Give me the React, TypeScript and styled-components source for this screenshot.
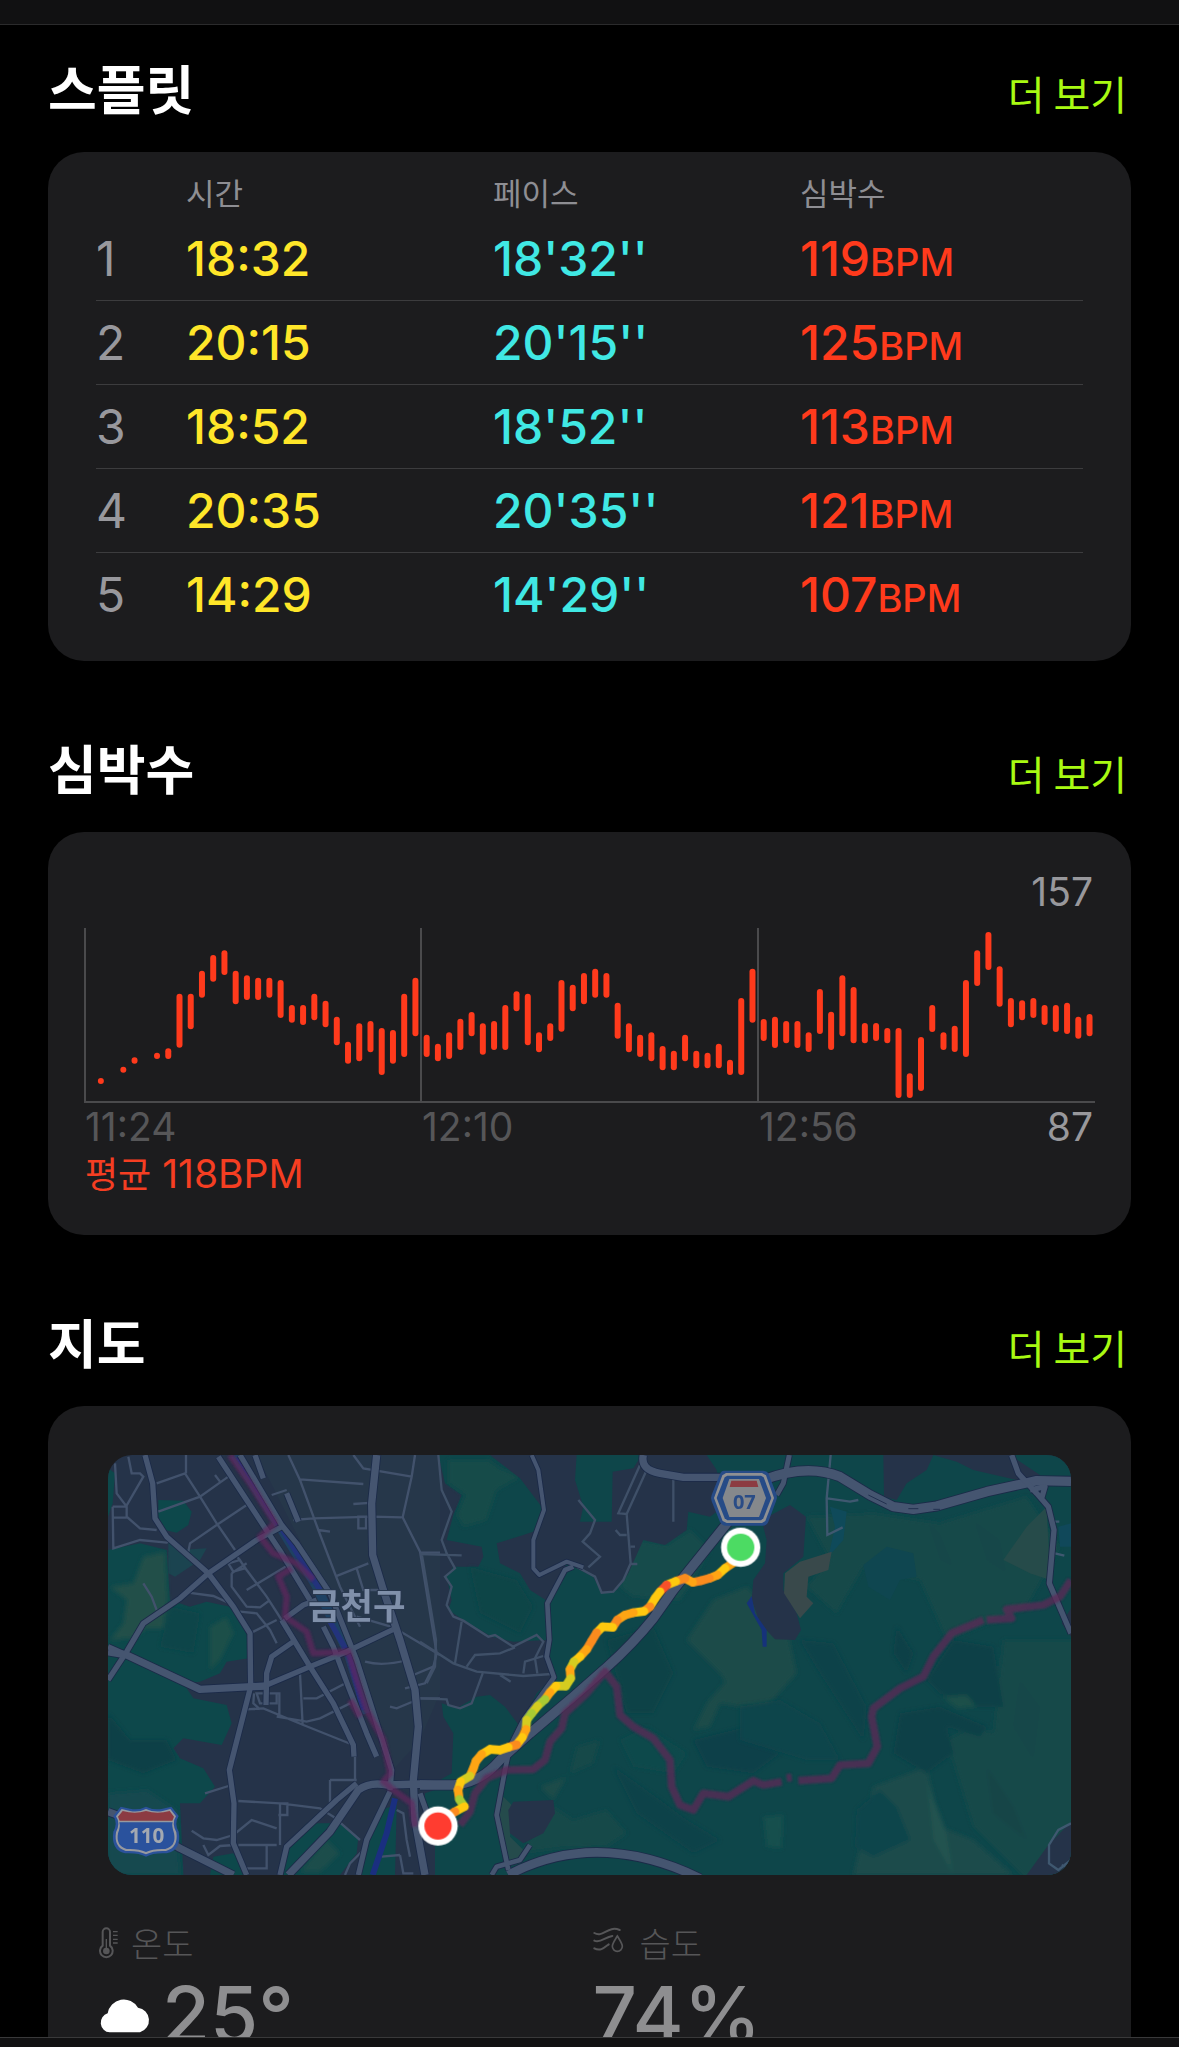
import React from "react";
import styled, { createGlobalStyle } from "styled-components";

const GlobalStyle = createGlobalStyle`
  html, body { margin: 0; background: #000; }
  * { box-sizing: border-box; }
  body { font-family: Inter, "Noto Sans CJK KR", sans-serif; -webkit-font-smoothing: antialiased; }
`;

const Screen = styled.div`
  height: 100vh;
  display: flex;
  flex-direction: column;
  background: #000;
  overflow: hidden;
`;

const TopBar = styled.header`
  flex: 0 0 25px;
  background: #111112;
  border-bottom: 1px solid #2b2b2c;
`;

const BottomBar = styled.footer`
  flex: 0 0 10px;
  background: #111112;
  border-top: 1px solid #39393a;
`;

const Content = styled.main`
  flex: 1;
  min-height: 0;
  overflow: hidden;
  padding: 26px 48px 0;
  display: flex;
  flex-direction: column;
  gap: 70px;
`;

const Section = styled.section`
  flex: none;
`;

const SectionHeader = styled.div`
  display: flex;
  align-items: baseline;
  justify-content: space-between;
  height: 101px;
  padding-right: 4px;
`;

const Title = styled.h2`
  margin: 0;
  font-family: "Noto Sans CJK KR", sans-serif;
  font-size: 53px;
  line-height: 72px;
  font-weight: 700;
  color: #fff;
`;

const MoreButton = styled.button`
  border: 0;
  padding: 0;
  background: none;
  font-family: "Noto Sans CJK KR", sans-serif;
  font-size: 40px;
  line-height: 48px;
  font-weight: 400;
  color: #a8fa12;
  cursor: pointer;
`;

const Card = styled.div<{ $pad: string }>`
  background: #1c1c1e;
  border-radius: 36px;
  padding: ${(p) => p.$pad};
`;

const SplitTable = styled.table`
  width: 100%;
  table-layout: fixed;
  border-collapse: separate;
  border-spacing: 0;
`;

const Col = styled.col<{ $w?: string }>`
  width: ${(p) => p.$w ?? "auto"};
`;

const HeadCell = styled.th`
  height: 45px;
  padding: 0;
  text-align: left;
  vertical-align: top;
  font-family: "Noto Sans CJK KR", sans-serif;
  font-size: 31px;
  line-height: 40px;
  font-weight: 400;
  color: #8e8e93;
`;

const SplitRow = styled.tr`
  &:not(:last-child) > td { border-bottom: 1px solid #3c3c3e; }
`;

const Cell = styled.td<{ $color: string; $light?: boolean }>`
  height: 84px;
  padding: 0;
  font-size: 48px;
  line-height: 60px;
  font-weight: ${(p) => (p.$light ? 400 : 500)};
  color: ${(p) => p.$color};
`;

const Unit = styled.span`
  font-size: 38px;
  line-height: 38px;
`;

const ChartMax = styled.div`
  text-align: right;
  font-size: 39px;
  line-height: 48px;
  padding-right: 2px;
  color: #98989c;
`;

const ChartSvg = styled.svg`
  display: block;
  width: 100%;
  height: auto;
  margin-top: 12px;
`;

const AxisRow = styled.div`
  display: grid;
  grid-template-columns: repeat(3, 1fr);
`;

const AxisCell = styled.div`
  display: flex;
  justify-content: space-between;
  padding: 0 2px 0 1px;
  font-size: 39px;
  line-height: 48px;
  color: #565658;
`;

const AxisMin = styled.span`
  color: #98989c;
`;

const Average = styled.div`
  padding-left: 1px;
  font-size: 39px;
  line-height: 46px;
  color: #f53e22;
`;

const AverageLabel = styled.span`
  font-size: 36px;
  line-height: 40px;
`;

const MapFrame = styled.div`
  margin: 0 12px;
  border-radius: 24px;
  overflow: hidden;
`;

const MapSvg = styled.svg`
  display: block;
  width: 100%;
  height: auto;
`;

const Stats = styled.div`
  display: grid;
  grid-template-columns: 1fr 1fr;
  margin-top: 44px;
`;

const Stat = styled.div`
  padding-left: 3px;
`;

const StatLabel = styled.div<{ $gap: number }>`
  display: flex;
  align-items: center;
  gap: ${(p) => p.$gap}px;
  font-family: "Noto Sans CJK KR", sans-serif;
  font-size: 34px;
  line-height: 48px;
  font-weight: 300;
  color: #565658;
`;

const StatValue = styled.div`
  display: flex;
  align-items: center;
  gap: 9px;
  font-size: 78px;
  line-height: 96px;
  font-weight: 500;
  color: #8e8e90;
`;

const splits = [
  { time: "18:32", pace: "18'32''", bpm: 119 },
  { time: "20:15", pace: "20'15''", bpm: 125 },
  { time: "18:52", pace: "18'52''", bpm: 113 },
  { time: "20:35", pace: "20'35''", bpm: 121 },
  { time: "14:29", pace: "14'29''", bpm: 107 },
];

// [slot, top, bottom] in thirds of a unit, measured down from 28 above the plot area
const bars: [number, number, number][] = [
  [1, 534, 552], [3, 500, 518], [4, 472, 491], [6, 458, 477], [7, 445, 477], [8, 281, 443], [9, 281, 388],
  [10, 212, 293], [11, 165, 245], [12, 151, 225], [13, 212, 313], [14, 226, 300], [15, 233, 300], [16, 233, 293],
  [17, 240, 354], [18, 315, 368], [19, 315, 375], [20, 281, 361], [21, 302, 382], [22, 350, 436], [23, 425, 491],
  [24, 370, 484], [25, 363, 457], [26, 384, 525], [27, 390, 491], [28, 281, 471], [29, 233, 409], [30, 404, 471],
  [31, 431, 484], [32, 397, 477], [33, 356, 450], [34, 336, 409], [35, 370, 464], [36, 363, 450], [37, 315, 450],
  [38, 274, 334], [39, 281, 436], [40, 397, 457], [41, 370, 423], [42, 240, 395], [43, 254, 334], [44, 219, 313],
  [45, 206, 293], [46, 219, 293], [47, 308, 416], [48, 370, 457], [49, 404, 471], [50, 397, 484], [51, 438, 511],
  [52, 452, 511], [53, 404, 484], [54, 452, 505], [55, 458, 505], [56, 431, 505], [57, 479, 525], [58, 294, 525],
  [59, 206, 368], [60, 357, 423], [61, 350, 444], [62, 363, 430], [63, 363, 444], [64, 397, 456], [65, 267, 402],
  [66, 335, 450], [67, 226, 409], [68, 261, 430], [69, 369, 430], [70, 369, 423], [71, 384, 430], [72, 384, 594],
  [73, 520, 594], [74, 411, 573], [75, 315, 396], [76, 397, 450], [77, 377, 456], [78, 240, 471], [79, 151, 258],
  [80, 96, 210], [81, 199, 320], [82, 294, 382], [83, 301, 361], [84, 294, 354], [85, 315, 375], [86, 315, 396],
  [87, 308, 402], [88, 350, 416], [89, 342, 409],
];

function HeartChart() {
  return (
    <ChartSvg viewBox="0 0 1011 175" role="img" aria-label="심박수">
      <g fill="#4a4a4c">
        <rect x="0" y="0" width="2" height="175" />
        <rect x="336" y="0" width="2" height="175" />
        <rect x="673" y="0" width="2" height="175" />
        <rect x="0" y="173" width="1011" height="2" />
      </g>
      <g fill="#ff3a1c">
        {bars.map(([slot, top, bottom]) => (
          <rect
            key={slot}
            x={(slot + 0.5) * 11.235 - 3}
            y={top / 3 - 28}
            width="6"
            height={(bottom - top) / 3}
            rx="3"
          />
        ))}
      </g>
    </ChartSvg>
  );
}

const route: [number, number][] = [
  [945, 365], [915, 385], [893, 405], [868, 415], [843, 422], [818, 427], [795, 415], [767, 424], [740, 435],
  [720, 455], [705, 475], [690, 500], [672, 514], [640, 518], [615, 525], [592, 540], [578, 562], [548, 560],
  [530, 578], [515, 603], [500, 628], [480, 650], [462, 665], [450, 688], [452, 715], [437, 738], [408, 738],
  [390, 757], [375, 778], [353, 798], [335, 820], [320, 840], [318, 868], [307, 892], [290, 914], [265, 922],
  [240, 930], [210, 928], [185, 943], [168, 963], [160, 985], [150, 1008], [122, 1025], [114, 1050], [118, 1078],
  [133, 1100], [105, 1115], [75, 1132],
];
const Y = "#ffc90f", O = "#ffa514", D = "#fb8b1e", R = "#f8502a", L = "#d5cc20", G = "#a8cc33";
const routeColors = [
  O, Y, O, D, D, O, D, Y, R, Y, Y, D, Y, O, O, D, Y, Y, D, D, O, Y, L, O, L, L, Y, O, G, L, G, L, O, Y, D, Y, Y,
  Y, O, O, O, L, Y, O, G, Y, D,
];

function RouteMap() {
  return (
    <MapSvg viewBox="0 0 2889 1260" role="img" aria-label="지도">
      <defs>
        <filter id="relief" x="-5%" y="-5%" width="110%" height="110%">
          <feGaussianBlur stdDeviation="7" />
        </filter>
        <filter id="border" x="-5%" y="-5%" width="110%" height="110%">
          <feGaussianBlur stdDeviation="3" />
        </filter>
      </defs>
      <rect width="2889" height="1260" fill="#253349" />

      {/* western parks */}
      <g transform="translate(-24 -45)">
        <path d="M470 45H1020V760L960 900 870 1000 700 500Z" fill="#26374a" />
        <g fill="#0d484b">
          <path d="M24 85L45 100 38 190 24 230Z" />
          <path d="M175 180L250 182 275 215 265 255 230 278 195 270 175 250Z" />
          <path d="M24 330L120 310 200 330 210 480 270 500 320 485 390 500 440 560 445 655 380 665 360 700 300 725 250 730 280 775 380 795 395 850 365 915 250 895 220 925 240 955 310 985 345 1040 300 1090 240 1090 250 1305H24Z" />
          <path d="M340 1250L400 1240 435 1280 430 1305H330Z" />
          <path d="M560 1215L620 1150 720 1150 775 1190 770 1240 720 1305H545Z" />
          <path d="M840 1110L890 1095 885 1305H780L800 1200Z" />
          <path d="M975 1070L1020 1050V1110L990 1120Z" />
        </g>
        <path d="M205 300L240 330 320 325 300 360 225 410 205 400Z" fill="#1b4450" />
        <g filter="url(#relief)">
          <path d="M130 350L195 335 203 480 190 565 140 565 100 595 30 600 70 550 80 480 30 440 100 430Z" fill="#204f4a" />
          <path d="M330 560L380 530 400 580 360 660 330 690Z" fill="#1a4f49" />
          <path d="M24 960L130 1000 230 960 200 900 90 900 24 820Z" fill="#0e4147" />
          <path d="M600 1295L680 1200 720 1240 660 1295Z" fill="#1c4d4b" />
          <path d="M24 1060L140 1050 230 1110 240 1305H24Z" fill="#13484f" />
          <path d="M210 500L300 520 280 640 180 620Z" fill="#0c4548" />
        </g>
      </g>

      {/* eastern hills */}
      <g transform="translate(936 -45)">
        <path
          d="M55 45L75 130 125 165 100 225 80 300 185 320 190 350 175 380 100 380 80 410 95 480 85 510 130 540 215 590 280 605 380 600 400 710 350 760 300 860 255 800 210 765 170 770 110 805 65 790 70 830 100 880 95 1000 60 1020 60 1045 15 1060 10 1150 45 1200V1305H1953V45Z"
          fill="#0e464a"
        />
        <g filter="url(#relief)">
          <path d="M85 60H205L240 85 300 110 230 150 200 240 130 260 110 225 135 165 85 130Z" fill="#174b49" />
          <path d="M655 300L740 315 810 270 870 330 820 420 780 480 640 470 600 440Z" fill="#184b4b" />
          <path d="M880 480L980 440 1100 560 1130 700 1040 800 960 800 900 700 800 600Z" fill="#1a4c4a" />
          <path d="M960 800L900 790 870 860 820 870 860 790 940 700Z" fill="#1a4c4a" />
          <path d="M300 1240L400 1100 460 1140 560 1110 620 1180 560 1220 420 1225Z" fill="#17494a" />
          <path d="M360 1040L440 1010 400 1080Z" fill="#1a4c4a" />
          <path d="M470 920L540 900 520 970 450 1000Z" fill="#15494a" />
          <path d="M580 980L720 1080 800 1140 900 1200 820 1240 650 1120Z" fill="#0e424a" />
          <path d="M560 600L700 560 760 700 700 820 620 820Z" fill="#0c4247" />
          <path d="M150 380L290 420 340 500 300 580 180 520Z" fill="#0c4447" />
          <path d="M600 900L680 860 800 940 760 1000 640 980Z" fill="#0f4a4c" />
          <path d="M820 900L980 860 1080 940 1000 1000 860 980Z" fill="#0d4149" />
        </g>
        <path d="M250 1070L280 1100 270 1190 320 1240 300 1270 265 1280 235 1140Z" fill="#254b4c" />
        <g fill="#253349">
          <path d="M210 45H470L465 120 490 200 480 245H575L578 95 640 85 665 45H860L890 90 910 200 870 230 805 215 800 270 735 315 670 300 625 400 590 450 545 460 520 410 440 370 385 485 330 450 300 400 240 370 230 310 310 285 355 270 365 200 300 115Z" />
          <path d="M280 1085L400 1080 405 1120 370 1180 310 1210 270 1180 265 1110Z" />
        </g>
      </g>
      <g transform="translate(1896 -45)">
        <g filter="url(#relief)">
          <path d="M200 230L400 220 600 250 860 170 960 320 860 500 620 600 540 420 370 380 290 520 200 440 270 360Z" fill="#184a4a" />
          <path d="M790 600L1020 600V1320L860 1320 700 1160 620 900 700 860 760 880Z" fill="#19494a" />
          <path d="M400 1040L560 980 600 1160 700 1200 820 1305H340Z" fill="#1a4c4b" />
          <path d="M640 600L760 620 790 800 680 800 600 760 560 720Z" fill="#0d4146" />
          <path d="M350 1110L420 1050 470 1100 510 1200 400 1250 345 1220Z" fill="#0d444c" />
          <path d="M480 820L600 800 740 860 720 890 620 860 640 940 560 1000 460 940Z" fill="#0c4147" />
          <path d="M180 600L280 610 380 800 370 900 240 700Z" fill="#0f424a" />
          <path d="M0 800L120 780 240 850 300 960 200 960 0 900Z" fill="#0e444c" />
          <path d="M560 240L600 280 640 380 600 360Z" fill="#14464a" />
          <path d="M700 240L780 300 800 400 740 360Z" fill="#14464a" />
          <path d="M560 1020L620 1180 640 1305 580 1200Z" fill="#225250" />
          <path d="M740 980L820 1100 860 1200 760 1120Z" fill="#144447" />
          <path d="M840 720L900 800 880 960 820 860Z" fill="#154648" />
          <path d="M470 560L520 640 500 700 460 640Z" fill="#0d4147" />
          <path d="M70 1130L130 1125 125 1225 80 1220Z" fill="#184f4e" />
          <path d="M610 770L680 765 710 800 650 805Z" fill="#1d4f49" />
        </g>
        <path d="M370 375L440 320 520 340 530 410 480 420 450 480 385 440Z" fill="#0f4650" />
        <path d="M270 200L320 215 310 300 265 350 285 260Z" fill="#0f4a5a" />
        <path d="M860 260L920 200 930 420 870 400 790 360Z" fill="#264b4a" />
        <path d="M955 260L993 250V320L960 320Z" fill="#10485a" />
        <g fill="#253349">
          <path d="M430 45H580L560 90 500 130 470 180 432 170Z" />
          <path d="M580 45H810L900 105 880 150 830 120 700 90 650 65Z" />
          <path d="M65 240L150 195 198 230 190 350 130 400V450L170 520 183 570 165 600 105 598 60 550 35 480 40 420 75 370 80 300Z" />
          <path d="M860 1305L925 1215 993 1145V1305Z" />
          <path d="M993 505L965 550 993 590Z" />
        </g>
        <path d="M135 400L180 365 275 335 265 390 205 410 200 470 220 490 180 535 132 460Z" fill="#39494b" />
        <path d="M20 490L35 468 45 520 80 570V620H68L65 570Z" fill="#16327a" />
      </g>

      {/* minor streets */}
      <g transform="translate(-24 -45)" fill="none" stroke="#42526c" strokeWidth="7">
        <path d="M45 70L50 160 80 200V230L120 265 170 270M38 200L40 325 120 300 200 308 215 300M38 233H80M38 200H78L130 110 120 100H95L85 50M170 130L255 100 300 170 350 250 405 330M258 100V45M175 215L300 170 385 110M265 335L270 310 350 255 440 195M345 105L360 125M130 430L155 470 170 510M265 458L340 468 400 495" />
        <path d="M405 340L440 390 500 470 545 540M440 450L565 375M395 400V440L440 500 480 502 510 480M420 515L470 520 510 570 530 610M450 580L530 540M395 400L440 370M385 370L420 360 435 385 400 395Z" />
        <path d="M600 700L608 855M610 775L650 775 745 725M530 830L620 845 660 835 750 790M440 808L490 805 610 855 760 915M462 760L460 790 480 808M500 760H538V830M470 760H530V790H480Z" />
        <path d="M565 45L600 120 655 270 720 440 780 560M515 165L560 150M600 118L790 132M760 192L820 188M580 240L640 235 820 230 905 232M760 45L790 85 935 110M945 45L935 110 908 232 960 335 1010 640 1000 680 975 730 915 745M655 270L690 275M960 338H1020M705 410L805 370M770 385L790 450 850 450M775 230V265H798V230Z" />
        <path d="M770 530L880 562 1020 645M795 665Q850 680 920 660M950 775H1020M870 800L890 805 950 780M940 705L1000 680M765 950V1020M690 1020H770M690 1020V1095" />
        <path d="M315 1060L395 1035M415 1083L540 1090 660 1105 700 1130 780 1200M540 1090V1215M415 1215H530M500 1215V1285H440M400 1185L455 1140 530 1165M275 1172L310 1195 350 1200 400 1185M310 1215L325 1245 360 1218 405 1215M530 1090H562V1125H535M735 1305L750 1270 790 1230M845 1250L900 1245M900 1245L910 1300H940M890 1110L910 1120 920 1200 930 1250" />
      </g>
      <g transform="translate(936 -45)" fill="none" stroke="#3f5068" strokeWidth="7">
        <path d="M55 45L65 150 95 215 65 300 80 340 105 385 75 410 95 440 80 495 100 530 130 542 205 590 225 585 280 620 350 585 370 605 345 655M0 342L125 346M5 340L25 460 48 600 45 680 20 730M0 605L100 670 170 695 310 708 395 702M125 545L105 670M140 680L165 645 240 640 285 622M188 700L155 790 120 805 85 795 80 778 0 775M310 700L315 665 370 648M345 655L352 700M240 705L272 725" />
        <path d="M475 180L525 240 510 280 488 305 540 350 505 382M660 75L595 220 620 222 680 90M620 222L632 370 610 420 580 455 545 458 525 410 470 380M760 120V245M632 320H645M632 372H652M587 270L600 285H620" />
      </g>
      <g transform="translate(1896 -45)" fill="none" stroke="#3f5870" strokeWidth="7">
        <path d="M272 45L260 175 262 285 308 262M262 175L330 185 355 180M945 340L973 347M930 245H958M993 1150L955 1170 927 1215V1270L955 1290 993 1260M965 1275L990 1285" />
      </g>

      {/* stream in the city */}
      <g transform="translate(-24 -45)" fill="none" strokeLinejoin="round">
        <path d="M405 45L540 260 650 440 745 640 800 820" stroke="#1e4163" strokeWidth="28" />
        <path d="M415 50L535 250 610 370 660 450M690 545L745 640 790 810" stroke="#23337c" strokeWidth="16" />
        <path d="M885 1075L860 1180 818 1305" stroke="#1a2f80" strokeWidth="18" />
      </g>

      {/* main roads: dark casing under a lighter line */}
      {[["#1b2a48", 5], ["#455570", 0]].map(([color, extra]) => (
        <g key={color} fill="none" stroke={color as string} strokeLinejoin="round">
          <g transform="translate(-24 -45)">
            <g strokeWidth={16 + (extra as number)}>
              <path d="M135 45L158 130 165 235 200 290 325 400 400 500 450 580 452 740 388 990 402 1090 400 1210 440 1305" />
              <path d="M24 720L80 635 130 550 240 475 325 400 470 300 550 258" />
              <path d="M355 50L440 180 545 340 630 480M545 540L630 680 700 790 760 915 762 950" />
              <path d="M498 795L500 700 515 650 580 605M500 735L630 680 740 635 880 568" />
              <path d="M670 560L700 620 745 740 800 880 830 950M555 535L610 495 650 480" />
              <path d="M420 45L545 255 590 310 690 460 770 660 875 990 870 1050M24 620L80 645" />
              <path d="M465 45L490 115M560 160L595 245" />
              <path d="M770 1030L710 1080 560 1220 540 1305M870 1055L800 1200 775 1305M960 1060L985 1130" />
            </g>
            <g strokeWidth={22 + (extra as number)}>
              <path d="M24 635L80 645 300 748 455 740 500 738" />
              <path d="M830 45L815 190 818 345 850 450 900 600 945 750 955 860 940 1020 945 1140 975 1305" />
              <path d="M565 1305L690 1175 775 1050Q810 1025 860 1035L960 1032 1020 1035" />
              <path d="M24 1115L120 1150 240 1225 400 1305" />
            </g>
          </g>
          <g transform="translate(936 -45)">
            <path d="M335 45L355 90 372 210 340 300 340 385 358 405 440 365 490 382" strokeWidth={12 + (extra as number)} />
            <path d="M460 380L435 390 382 490 388 600 380 650 402 712 310 840 270 920 255 990 230 1125 265 1290M330 1215L300 1260 230 1280 215 1305" strokeWidth={14 + (extra as number)} />
            <path d="M0 1035H100Q180 1030 240 960L330 880 460 770 560 682Q640 610 700 535L760 450 925 245" strokeWidth={28 + (extra as number)} />
            <path d="M670 45Q660 90 720 100L790 112H900" strokeWidth={22 + (extra as number)} />
            <path d="M265 1305Q530 1165 840 1315" strokeWidth={26 + (extra as number)} />
          </g>
          <g transform="translate(1896 -45)">
            <path d="M148 45L130 130 110 165" strokeWidth={15 + (extra as number)} />
            <path d="M70 120Q200 70 300 110L390 165 460 200 520 208 590 198 740 155 890 122 993 124" strokeWidth={28 + (extra as number)} />
            <path d="M815 45L835 100 890 160 925 200 942 270 928 430 993 580M870 150L915 140 905 175" strokeWidth={16 + (extra as number)} />
          </g>
        </g>
      ))}
      <g transform="translate(1896 -45)" fill="none" stroke="#22314f" strokeWidth="3">
        <path d="M385 165L440 192M505 206H535M580 208H600" />
      </g>

      {/* district border */}
      <g fill="none" strokeLinejoin="round" filter="url(#border)">
        <path
          transform="translate(-24 -45)"
          d="M390 45L450 130 525 250 480 290 520 340 590 370 640 420M575 385L535 410 560 470 555 530 620 575 640 640 745 635 770 720 800 810 850 900 870 1000 850 1025 880 1050 935 1090 945 1160M750 780L780 830"
          stroke="#66265e"
          strokeWidth="19"
          opacity="0.66"
        />
        <path
          transform="translate(936 -45)"
          d="M120 1155L150 1115 165 1060 200 1015 260 990 340 988 375 960 390 905 425 865 435 820 500 760 555 695 590 740 600 825 640 860 700 895 750 960 755 1040 780 1095 820 1110 850 1060 925 1070 1000 1022 1030 1035 1085 1025M1100 1014L1115 1012M1135 1022L1235 1015 1260 975 1345 970 1372 920 1355 830 1360 805 1440 745 1510 710 1540 650 1595 580 1690 540M1700 540L1775 535 1760 508 1870 495 1920 470 1953 420"
          stroke="#5f2856"
          strokeWidth="23"
          opacity="0.74"
        />
      </g>

      {/* place name */}
      <text
        x="600"
        y="493"
        fill="#8090aa"
        stroke="#28374e"
        strokeWidth="6"
        paintOrder="stroke"
        fontFamily="Noto Sans CJK KR, sans-serif"
        fontSize="106"
        fontWeight="700"
      >
        금천구
      </text>

      {/* expressway shield */}
      <g transform="translate(-24 -45)">
        <path d="M62 1100L90 1106Q115 1112 138 1100 162 1112 188 1106L214 1100 236 1128Q222 1150 236 1175 246 1230 200 1240 160 1238 138 1250 115 1238 75 1240 32 1230 40 1175 54 1150 40 1128Z" fill="#2b529b" />
        <path d="M65 1107L90 1113Q115 1118 138 1107 162 1118 188 1113L211 1107 228 1129Q214 1150 229 1177 236 1222 198 1233 160 1231 138 1243 115 1231 77 1233 41 1222 48 1177 62 1150 48 1129Z" fill="#97999f" />
        <path d="M68 1113Q105 1124 138 1113 172 1124 209 1113L222 1130 217 1142H59L54 1130Z" fill="#8c3b42" />
        <path d="M58 1147H218Q214 1155 222 1180 230 1218 196 1227 160 1225 138 1236 115 1225 80 1227 47 1218 54 1180 62 1160 58 1147Z" fill="#2a529d" />
        <text x="140" y="1208" textAnchor="middle" fill="#a4a9b1" fontFamily="Noto Sans, sans-serif" fontSize="62" fontWeight="700">
          110
        </text>
      </g>

      {/* national route shield */}
      <g transform="translate(936 -45)">
        <path d="M912 92H1030Q1040 92 1045 100L1070 165Q1073 175 1068 184L1045 245Q1040 257 1028 257H918Q906 257 900 246L875 184Q871 174 875 165L900 102Q904 92 912 92Z" fill="#264b87" />
        <path d="M918 99H1026L1038 106 1062 174 1036 243 1026 249H920L908 243 882 174 907 106Z" fill="#8e9093" />
        <path d="M922 107H1023L1031 112 1054 174 1030 235 1023 241H922L914 235 890 174 914 112Z" fill="#264b87" />
        <path d="M928 117H1017L1038 174 1017 231H928L908 174Z" fill="#85888c" />
        <path d="M934 122H1010L1015 141H929Z" fill="#8c3b42" />
        <text x="973" y="206" textAnchor="middle" fill="#2a4c86" fontFamily="Noto Sans, sans-serif" fontSize="60" fontWeight="700">
          07
        </text>
      </g>

      {/* recorded route with its start and finish */}
      <g transform="translate(936 -45)">
        <g strokeWidth="26" strokeLinecap="round">
          {route.slice(1).map(([x, y], i) => (
            <line key={i} x1={route[i][0]} y1={route[i][1]} x2={x} y2={y} stroke={routeColors[i]} />
          ))}
        </g>
        <circle cx="962" cy="322" r="59" fill="#fff" />
        <circle cx="962" cy="322" r="41" fill="#4cdb63" />
        <circle cx="54" cy="1158" r="59" fill="#fff" />
        <circle cx="54" cy="1158" r="41" fill="#ff3c30" />
      </g>
    </MapSvg>
  );
}

function ThermometerIcon() {
  return (
    <svg width="20" height="32" viewBox="0 0 60 96" fill="none" stroke="#565658" strokeWidth="6">
      <path d="M11 56V15a11 11 0 0 1 22 0V56a19 19 0 1 1-22 0Z" />
      <path d="M22 36V66M42 14H56M42 25H56M42 37H56M42 48H56" strokeWidth="4" />
      <circle cx="22" cy="72" r="10" fill="#565658" stroke="none" />
    </svg>
  );
}

function HumidityIcon() {
  return (
    <svg width="31" height="32" viewBox="0 0 93 96" fill="none" stroke="#565658" strokeWidth="6" strokeLinecap="round">
      <path d="M4 18C30 34 44 -6 80 9M4 41C22 50 36 30 58 27M4 64C22 74 34 62 47 52" />
      <path d="M73 27C82 42 88 50 88 58a15 15 0 0 1-30 0C58 50 64 42 73 27Z" strokeWidth="5" />
    </svg>
  );
}

function CloudIcon() {
  return (
    <svg width="54" height="36" viewBox="0 0 162 108" fill="#fff">
      <path d="M32 106A28 29 0 0 1 26 49A49 49 0 0 1 117 32A38 38 0 0 1 123 106Z" />
    </svg>
  );
}

function Header({ title }: { title: string }) {
  return (
    <SectionHeader>
      <Title>{title}</Title>
      <MoreButton type="button">더 보기</MoreButton>
    </SectionHeader>
  );
}

export default function App() {
  return (
    <Screen>
      <GlobalStyle />
      <TopBar />
      <Content>
        <Section>
          <Header title="스플릿" />
          <Card $pad="20px 48px 24px">
            <SplitTable>
              <colgroup>
                <Col $w="90px" />
                <Col $w="307px" />
                <Col $w="307px" />
                <Col />
              </colgroup>
              <thead>
                <tr>
                  <HeadCell />
                  <HeadCell scope="col">시간</HeadCell>
                  <HeadCell scope="col">페이스</HeadCell>
                  <HeadCell scope="col">심박수</HeadCell>
                </tr>
              </thead>
              <tbody>
                {splits.map((s, i) => (
                  <SplitRow key={s.time}>
                    <Cell $color="#98989d" $light>{i + 1}</Cell>
                    <Cell $color="#ffe629">{s.time}</Cell>
                    <Cell $color="#40e8e4">{s.pace}</Cell>
                    <Cell $color="#ff3a1c">
                      {s.bpm}
                      <Unit>BPM</Unit>
                    </Cell>
                  </SplitRow>
                ))}
              </tbody>
            </SplitTable>
          </Card>
        </Section>

        <Section>
          <Header title="심박수" />
          <Card $pad="36px 36px 38px">
            <ChartMax>157</ChartMax>
            <HeartChart />
            <AxisRow>
              <AxisCell>11:24</AxisCell>
              <AxisCell>12:10</AxisCell>
              <AxisCell>
                12:56
                <AxisMin>87</AxisMin>
              </AxisCell>
            </AxisRow>
            <Average>
              <AverageLabel>평균</AverageLabel> 118BPM
            </Average>
          </Card>
        </Section>

        <Section>
          <Header title="지도" />
          <Card $pad="49px 48px 48px">
            <MapFrame>
              <RouteMap />
            </MapFrame>
            <Stats>
              <Stat>
                <StatLabel $gap={12}>
                  <ThermometerIcon />
                  온도
                </StatLabel>
                <StatValue>
                  <CloudIcon />
                  25°
                </StatValue>
              </Stat>
              <Stat>
                <StatLabel $gap={16}>
                  <HumidityIcon />
                  습도
                </StatLabel>
                <StatValue>74%</StatValue>
              </Stat>
            </Stats>
          </Card>
        </Section>
      </Content>
      <BottomBar />
    </Screen>
  );
}
